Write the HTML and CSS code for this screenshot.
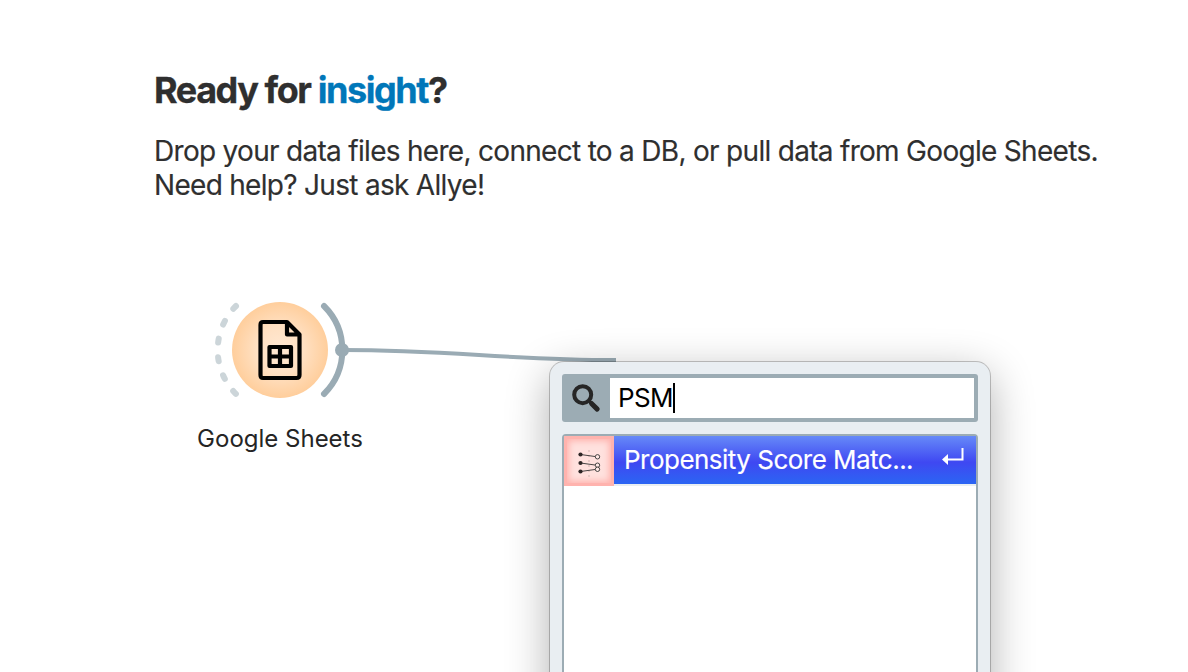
FILE: index.html
```html
<!DOCTYPE html>
<html lang="en">
<head>
<meta charset="utf-8">
<title>Workflow canvas</title>
<link rel="stylesheet" href="styles.css">
</head>
<body>
<main class="canvas">
  <header class="intro">
    <h1 class="intro-title">Ready for <span class="accent">insight</span>?</h1>
    <p class="intro-text">Drop your data files here, connect to a DB, or pull data from Google Sheets.<br>Need help? Just ask Allye!</p>
  </header>

  <svg class="graph" width="440" height="120" viewBox="200 290 440 120" aria-hidden="true">
    <defs>
      <radialGradient id="nodeFill">
        <stop offset="0" stop-color="#ffe8d3"/>
        <stop offset="0.5" stop-color="#ffe0c2"/>
        <stop offset="1" stop-color="#ffce9c"/>
      </radialGradient>
    </defs>
    <path class="link" d="M342 350C452 350 506 360 616 360"/>
    <path class="anchor-in" d="M236 306A62 62 0 0 0 236 394"/>
    <path class="anchor-out" d="M324 306A62 62 0 0 1 324 394"/>
    <circle class="port" cx="342" cy="350" r="7"/>
    <circle cx="280" cy="350" r="48" fill="url(#nodeFill)"/>
    <path class="doc" d="M263 322H287L299.500 334.500V375Q299.500 378 296.500 378H263Q260.500 378 260.500 375V325Q260.500 322 263 322ZM287 322V334.500H299.500"/>
    <path class="doc-grid" d="M269.500 347H291V366H269.500ZM280 347V366M269.500 356.500H291"/>
  </svg>
  <div class="node-label">Google Sheets</div>

  <section class="menu">
    <div class="search">
      <svg class="search-icon" width="48" height="40" viewBox="562 378 48 40" aria-hidden="true">
        <circle cx="582.700" cy="394.700" r="8.500"/>
        <path class="handle-neck" d="M588.700 400.700L592 404"/>
        <path class="handle" d="M591.500 403.500L597.200 409.100"/>
      </svg>
      <div class="field"><span class="query">PSM</span><span class="caret"></span></div>
    </div>
    <div class="results">
      <div class="result">
        <div class="result-icon">
          <svg width="50" height="50" viewBox="564 436 50 50" aria-hidden="true">
            <path class="axis" d="M589 450V477"/>
            <path class="pair" d="M580.500 454.500L595 456.500M580.500 463L595 465M580.500 471.500L595 469.500"/>
            <g class="dots"><circle cx="580.500" cy="454.500" r="2.100"/><circle cx="580.500" cy="463" r="2.100"/><circle cx="580.500" cy="471.500" r="2.100"/></g>
            <g class="rings"><circle cx="597.500" cy="456.800" r="2.200"/><circle cx="597.500" cy="465.200" r="2.200"/><circle cx="597.500" cy="469.300" r="2.200"/></g>
          </svg>
        </div>
        <div class="result-row">
          <span class="result-name">Propensity Score Matc...</span>
          <svg class="enter" width="24" height="20" viewBox="941 447 24 20" aria-hidden="true">
            <path class="enter-line" d="M962.500 448V459.500H947"/>
            <path class="enter-head" d="M942 459.500L948 454V465Z"/>
          </svg>
        </div>
      </div>
    </div>
  </section>
</main>
</body>
</html>
```
FILE: styles.css
```css
* { box-sizing: border-box; }
body {
  margin: 0;
  background: #fff;
  color: #2f2f2f;
  font-family: Inter, "Liberation Sans", sans-serif;
}
.canvas {
  position: relative;
  width: 1188px;
  height: 672px;
  overflow: hidden;
}
.intro { padding: 67px 0 0 154px; white-space: nowrap; }
.intro-title {
  margin: 0;
  font-size: 36px;
  line-height: 46px;
  font-weight: 700;
  letter-spacing: -1.43px;
  -webkit-text-stroke: 0.3px currentColor;
}
.accent { color: #0077b9; }
.intro-text {
  margin: 21px 0 0;
  font-size: 28px;
  line-height: 34px;
  letter-spacing: -0.7px;
  -webkit-text-stroke: 0.15px currentColor;
}

.graph { position: absolute; left: 200px; top: 290px; }
.link { fill: none; stroke: #9aabb4; stroke-width: 4; }
.anchor-in, .anchor-out { fill: none; stroke-width: 6; stroke-linecap: round; }
.anchor-in { stroke: #ccd5d9; stroke-dasharray: 4 14.7; }
.anchor-out { stroke: #9aabb4; }
.port { fill: #9aabb4; }
.doc, .doc-grid { fill: none; stroke: #000; stroke-width: 4.2; stroke-linejoin: round; }
.node-label {
  position: absolute;
  left: 130px;
  top: 424px;
  width: 300px;
  text-align: center;
  font-size: 24px;
  line-height: 30px;
  color: #252525;
}

.menu {
  position: absolute;
  left: 550px;
  top: 362px;
  width: 440px;
  height: 420px;
  padding: 12px;
  display: flex;
  flex-direction: column;
  gap: 12px;
  border-radius: 14px;
  background: #e9eef2;
  box-shadow: 0 0 0 1px rgba(0, 0, 0, 0.22), 0 12px 44px rgba(0, 0, 0, 0.32);
}
.search {
  display: flex;
  flex: none;
  height: 48px;
  width: 416px;
  padding: 4px 4px 4px 0;
  border-radius: 3px;
  background: #9cacb4;
}
.search-icon { flex: none; fill: none; stroke: #262626; }
.search-icon circle { stroke-width: 4; }
.handle-neck { stroke-width: 3; }
.handle { stroke-width: 5; stroke-linecap: round; }
.field {
  flex: 1;
  display: flex;
  align-items: center;
  padding-left: 8px;
  background: #fff;
  color: #000;
  font-size: 26px;
  line-height: 40px;
}
.query { letter-spacing: -0.6px; }
.caret { width: 2px; height: 30px; background: #000; }
.results {
  flex: 1;
  width: 416px;
  border: 2px solid #9cacb4;
  border-radius: 4px 4px 0 0;
  background: #fff;
}
.result { display: flex; height: 50px; }
.result-icon {
  width: 50px;
  height: 50px;
  background: #ffe1de;
  box-shadow: inset 0 0 0 3px #ffb3ae, inset 0 0 6px 5px #ffb3ae;
}
.result-icon svg { display: block; }
.axis { stroke: #e9cbc8; stroke-width: 2; stroke-dasharray: 2 3; }
.pair { fill: none; stroke: #333; stroke-width: 0.9; }
.dots { fill: #2c2525; }
.rings { fill: #ffe8e5; stroke: #333; stroke-width: 0.9; }
.result-row {
  flex: 1;
  display: flex;
  justify-content: space-between;
  padding: 0 11px 0 10px;
  border-bottom: 2px solid #e9eef2;
  background: linear-gradient(#668af8 0, #3f48f2 55%, #2b65f3 100%);
  color: #fff;
}
.result-name {
  font-size: 26px;
  line-height: 48px;
  letter-spacing: -0.52px;
  white-space: nowrap;
  -webkit-text-stroke: 0.15px currentColor;
}
.enter { margin-top: 11px; flex: none; }
.enter-line { fill: none; stroke: #fff; stroke-width: 2; }
.enter-head { fill: #fff; }
```
